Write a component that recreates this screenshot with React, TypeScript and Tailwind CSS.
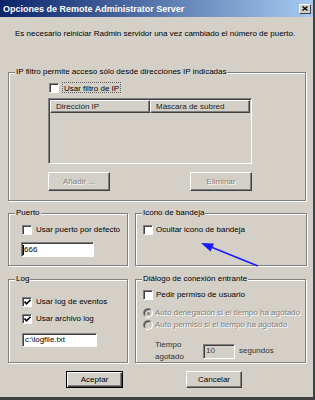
import React from "react";

const disabledText = "text-[#808080] [text-shadow:1px_1px_0_#ffffff]";

function Check({ checked = false }: { checked?: boolean }) {
  return (
    <span className="w-[10px] h-[10px] shrink-0 bg-white border border-t-[#808080] border-l-[#808080] border-b-white border-r-white shadow-[inset_1px_1px_0_#404040] flex items-center justify-center">
      {checked && (
        <svg width="7" height="6" viewBox="0 0 7 6">
          <path d="M0.5 2.5 L2.5 4.8 L6.5 0.8" stroke="#000" strokeWidth="1.6" fill="none" />
        </svg>
      )}
    </span>
  );
}

function Radio({ dot = false }: { dot?: boolean }) {
  return (
    <span className="w-[10px] h-[10px] shrink-0 rounded-full bg-[#d4d0c8] border border-t-[#808080] border-l-[#808080] border-b-white border-r-white shadow-[inset_1px_1px_0_#404040] flex items-center justify-center">
      {dot && <span className="w-[3px] h-[3px] rounded-full bg-[#808080]" />}
    </span>
  );
}

function Group({
  title,
  className,
  children,
}: {
  title: string;
  className: string;
  children?: React.ReactNode;
}) {
  return (
    <div
      className={
        "relative border border-[#808080] shadow-[inset_1px_1px_0_#ffffff,1px_1px_0_#ffffff] " +
        className
      }
    >
      <span className="absolute left-[6px] top-[-6px] bg-[#d4d0c8] px-[1px] leading-[10px] text-black whitespace-nowrap">
        {title}
      </span>
      {children}
    </div>
  );
}

function Btn({
  label,
  className,
  disabled = false,
  def = false,
}: {
  label: string;
  className: string;
  disabled?: boolean;
  def?: boolean;
}) {
  return (
    <div
      className={
        "flex items-center justify-center " +
        (def
          ? "border border-black shadow-[inset_1px_1px_0_#ffffff,inset_-1px_-1px_0_#404040,inset_-2px_-2px_0_#808080] "
          : "border border-t-white border-l-white border-b-[#404040] border-r-[#404040] shadow-[inset_-1px_-1px_0_#808080] ") +
        (disabled ? disabledText + " " : "text-black ") +
        className
      }
    >
      {label}
    </div>
  );
}

export default function App() {
  return (
    <div
      className="w-[315px] h-[400px] bg-[#d4d0c8] flex flex-col border-r-2 border-b-[3px] border-r-[#404040] border-b-[#404040] overflow-hidden text-[8px] leading-[10px] text-black"
      style={{ fontFamily: '"Liberation Sans", Arial, sans-serif' }}
    >
      {/* Title bar */}
      <div className="h-[17px] shrink-0 flex items-center justify-between pl-[3px] pr-[2px] bg-[linear-gradient(to_right,#0a246a,#a6caf0)]">
        <span className="text-white font-bold text-[9px]">
          Opciones de Remote Administrator Server
        </span>
        <span className="w-[12px] h-[10px] bg-[#d4d0c8] border border-t-white border-l-white border-b-[#404040] border-r-[#404040] flex items-center justify-center">
          <svg width="6" height="5" viewBox="0 0 6 5">
            <path d="M0.5 0.5 L5.5 4.5 M5.5 0.5 L0.5 4.5" stroke="#000" strokeWidth="1.3" />
          </svg>
        </span>
      </div>

      {/* Body */}
      <div className="flex flex-col pl-[8px]">
        <p className="mt-[12px] pl-[7px] h-[10px] whitespace-nowrap">
          Es necesario reiniciar Radmin servidor una vez cambiado el número de puerto.
        </p>

        {/* IP filter group */}
        <Group
          title="IP filtro permite acceso sólo desde direcciones IP indicadas"
          className="mt-[33px] w-[298px] h-[129px] shrink-0 flex flex-col pl-[39px] pt-[9px]"
        >
          <div className="flex items-center h-[11px] ml-[1px]">
            <Check />
            <span className="ml-[3px] px-[1px] h-[11px] leading-[11px] border border-dotted border-[#606060]">
              Usar filtro de IP
            </span>
          </div>
          <div className="mt-[5px] w-[204px] h-[66px] bg-[#d4d0c8] border border-t-[#808080] border-l-[#808080] border-b-white border-r-white shadow-[inset_1px_1px_0_#404040] pl-[1px] pt-[1px]">
            <div className="flex h-[13px]">
              <div className="w-[100px] h-[13px] border border-t-white border-l-white border-b-[#404040] border-r-[#404040] shadow-[inset_-1px_-1px_0_#808080] pl-[5px] leading-[11px] text-[#202020]">
                Dirección IP
              </div>
              <div className="w-[100px] h-[13px] border border-t-white border-l-white border-b-[#404040] border-r-[#404040] shadow-[inset_-1px_-1px_0_#808080] pl-[5px] leading-[11px] text-[#202020]">
                Máscara de subred
              </div>
            </div>
          </div>
          <div className="mt-[8px] w-[204px] flex justify-between">
            <Btn label="Añadir ..." disabled className="w-[62px] h-[19px]" />
            <Btn label="Eliminar" disabled className="w-[62px] h-[19px]" />
          </div>
        </Group>

        {/* Row 2 */}
        <div className="mt-[12px] flex gap-[7px]">
          <Group title="Puerto" className="w-[120px] h-[53px] flex flex-col pl-[12px] pt-[11px]">
            <div className="flex items-center h-[10px] ml-[1px]">
              <Check />
              <span className="ml-[4px] whitespace-nowrap">Usar puerto por defecto</span>
            </div>
            <div className="mt-[7px] w-[73px] h-[15px] bg-white border border-t-[#808080] border-l-[#808080] border-b-white border-r-white shadow-[inset_1px_1px_0_#404040] flex items-center pl-[1px] leading-[12px]">
              <span className="w-px h-[10px] bg-black" />
              <span>666</span>
            </div>
          </Group>
          <Group title="Icono de bandeja" className="w-[172px] h-[53px] flex flex-col pl-[7px] pt-[11px]">
            <div className="flex items-center h-[10px]">
              <Check />
              <span className="ml-[3px] whitespace-nowrap">Ocultar icono de bandeja</span>
            </div>
            <svg
              className="absolute left-0 top-0 overflow-visible"
              width="172"
              height="53"
              viewBox="0 0 172 53"
            >
              <path d="M122 52 L75 33" stroke="#1a1aff" strokeWidth="1.6" fill="none" />
              <path d="M65 29 L78 29.5 L74.5 37.5 Z" fill="#1a1aff" />
            </svg>
          </Group>
        </div>

        {/* Row 3 */}
        <div className="mt-[13px] flex gap-[7px]">
          <Group title="Log" className="w-[120px] h-[84px] flex flex-col pl-[13px] pt-[17px]">
            <div className="flex items-center h-[10px]">
              <Check checked />
              <span className="ml-[4px] whitespace-nowrap">Usar log de eventos</span>
            </div>
            <div className="mt-[7px] flex items-center h-[10px]">
              <Check checked />
              <span className="ml-[4px] whitespace-nowrap">Usar archivo log</span>
            </div>
            <div className="mt-[9px] w-[75px] h-[14px] bg-white border border-t-[#808080] border-l-[#808080] border-b-white border-r-white shadow-[inset_1px_1px_0_#404040] flex items-center pl-[2px] leading-[12px]">
              c:\logfile.txt
            </div>
          </Group>
          <Group title="Diálogo de conexión entrante" className="w-[171px] h-[84px] flex flex-col pl-[7px] pt-[10px]">
            <div className="flex items-center h-[10px]">
              <Check />
              <span className="ml-[3px] whitespace-nowrap">Pedir permiso de usuario</span>
            </div>
            <div className="mt-[8px] flex items-center h-[10px]">
              <Radio dot />
              <span className={"ml-[2px] whitespace-nowrap " + disabledText}>
                Auto denegación si el tiempo ha agotado
              </span>
            </div>
            <div className="mt-[2px] flex items-center h-[10px]">
              <Radio />
              <span className={"ml-[2px] whitespace-nowrap " + disabledText}>
                Auto permiso si el tiempo ha agotado
              </span>
            </div>
            <div className="mt-[9px] ml-[12px] flex items-center">
              <div className="w-[48px] leading-[12px] text-[#303030]">
                Tiempo
                <br />
                agotado
              </div>
              <div className="w-[32px] h-[15px] bg-[#d4d0c8] border border-t-[#808080] border-l-[#808080] border-b-white border-r-white shadow-[inset_1px_1px_0_#404040] flex items-center pl-[2px] text-[#404040]">
                10
              </div>
              <span className="ml-[4px] text-[#303030]">segundos</span>
            </div>
          </Group>
        </div>

        {/* Buttons */}
        <div className="mt-[8px] flex">
          <Btn label="Aceptar" def className="ml-[58px] w-[57px] h-[17px]" />
          <Btn label="Cancelar" className="ml-[63px] w-[56px] h-[17px]" />
        </div>
      </div>
    </div>
  );
}
